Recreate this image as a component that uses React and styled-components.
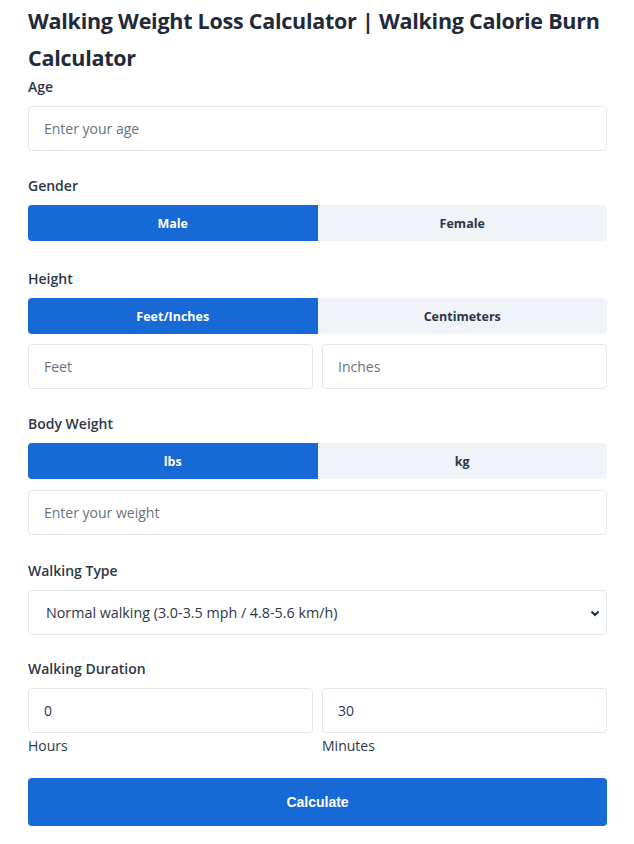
import React, { useState } from "react";
import styled, { createGlobalStyle } from "styled-components";

const Global = createGlobalStyle`
  html, body { margin: 0; padding: 0; background: #fff; }
  body { font-family: "Open Sans", "Noto Sans", sans-serif; color: #2d3748; }
  * { box-sizing: border-box; }
`;

const Page = styled.div`
  padding: 2px 27px 16px 28px;
`;

const Title = styled.h1`
  margin: 0;
  font-size: 21.5px;
  line-height: 37px;
  font-weight: 700;
  color: #1f2a3a;
  letter-spacing: -0.25px;
`;

const Field = styled.div`
  display: flex;
  flex-direction: column;
  margin-bottom: ${(p) => p.$mb ?? 25}px;
`;

const Label = styled.label`
  font-size: 14px;
  font-weight: 600;
  color: #2d3748;
  line-height: 21px;
  margin-bottom: 9px;
`;

const Input = styled.input`
  width: 100%;
  height: 45px;
  border: 1px solid #e2e8f0;
  border-radius: 4px;
  padding: 0 15px;
  font-family: "Open Sans", "Noto Sans", sans-serif;
  font-size: 14px;
  color: #2d3748;
  background: #fff;
  outline: none;
  &::placeholder { color: #6b7280; }
`;

const Toggle = styled.div`
  display: grid;
  grid-template-columns: 1fr 1fr;
  height: 36px;
  border-radius: 4px;
  overflow: hidden;
  background: #f0f3f8;
  margin-bottom: ${(p) => p.$mb ?? 0}px;
`;

const ToggleBtn = styled.button`
  border: none;
  font-family: "Open Sans", "Noto Sans", sans-serif;
  font-size: 12.5px;
  font-weight: 700;
  cursor: pointer;
  background: ${(p) => (p.$active ? "#1769d6" : "#f0f3f8")};
  color: ${(p) => (p.$active ? "#fff" : "#2d3748")};
`;

const Row = styled.div`
  display: grid;
  grid-template-columns: 1fr 1fr;
  gap: 9px;
`;

const Col = styled.div`
  display: flex;
  flex-direction: column;
`;

const SubLabel = styled.span`
  font-size: 14px;
  color: #2d3748;
  margin-top: 3px;
  line-height: 20px;
`;

const SelectWrap = styled.div`
  position: relative;
`;

const Select = styled.select`
  width: 100%;
  height: 45px;
  border: 1px solid #e2e8f0;
  border-radius: 4px;
  padding: 0 17px;
  font-family: "Open Sans", "Noto Sans", sans-serif;
  font-size: 14.3px;
  color: #2d3748;
  background: #fff;
  appearance: none;
  -webkit-appearance: none;
  outline: none;
`;

const Chevron = styled.svg`
  position: absolute;
  right: 6px;
  top: 50%;
  transform: translateY(-50%);
  pointer-events: none;
`;

const Button = styled.button`
  width: 100%;
  height: 48px;
  border: none;
  border-radius: 4px;
  background: #1769d6;
  color: #fff;
  font-family: "Liberation Sans", Arial, sans-serif;
  font-size: 14px;
  font-weight: 700;
  margin-top: 22px;
`;

export default function App() {
  const [gender, setGender] = useState("male");
  const [hu, setHu] = useState("ft");
  const [wu, setWu] = useState("lbs");
  return (
    <Page>
      <Global />
      <Title>Walking Weight Loss Calculator | Walking Calorie Burn Calculator</Title>
      <Field $mb={24}>
        <Label>Age</Label>
        <Input placeholder="Enter your age" />
      </Field>
      <Field $mb={27}>
        <Label>Gender</Label>
        <Toggle>
          <ToggleBtn $active={gender === "male"} onClick={() => setGender("male")}>Male</ToggleBtn>
          <ToggleBtn $active={gender === "female"} onClick={() => setGender("female")}>Female</ToggleBtn>
        </Toggle>
      </Field>
      <Field $mb={24}>
        <Label>Height</Label>
        <Toggle $mb={10}>
          <ToggleBtn $active={hu === "ft"} onClick={() => setHu("ft")}>Feet/Inches</ToggleBtn>
          <ToggleBtn $active={hu === "cm"} onClick={() => setHu("cm")}>Centimeters</ToggleBtn>
        </Toggle>
        <Row>
          <Input placeholder="Feet" />
          <Input placeholder="Inches" />
        </Row>
      </Field>
      <Field>
        <Label>Body Weight</Label>
        <Toggle $mb={11}>
          <ToggleBtn $active={wu === "lbs"} onClick={() => setWu("lbs")}>lbs</ToggleBtn>
          <ToggleBtn $active={wu === "kg"} onClick={() => setWu("kg")}>kg</ToggleBtn>
        </Toggle>
        <Input placeholder="Enter your weight" />
      </Field>
      <Field $mb={23}>
        <Label>Walking Type</Label>
        <SelectWrap>
          <Select defaultValue="normal">
            <option value="normal">Normal walking (3.0-3.5 mph / 4.8-5.6 km/h)</option>
          </Select>
          <Chevron width="12" height="12" viewBox="0 0 12 12">
            <path d="M2.5 4.5 L6 8 L9.5 4.5" fill="none" stroke="#1f2a3a" strokeWidth="2" />
          </Chevron>
        </SelectWrap>
      </Field>
      <Field $mb={0}>
        <Label>Walking Duration</Label>
        <Row>
          <Col>
            <Input defaultValue="0" />
            <SubLabel>Hours</SubLabel>
          </Col>
          <Col>
            <Input defaultValue="30" />
            <SubLabel>Minutes</SubLabel>
          </Col>
        </Row>
      </Field>
      <Button>Calculate</Button>
    </Page>
  );
}
